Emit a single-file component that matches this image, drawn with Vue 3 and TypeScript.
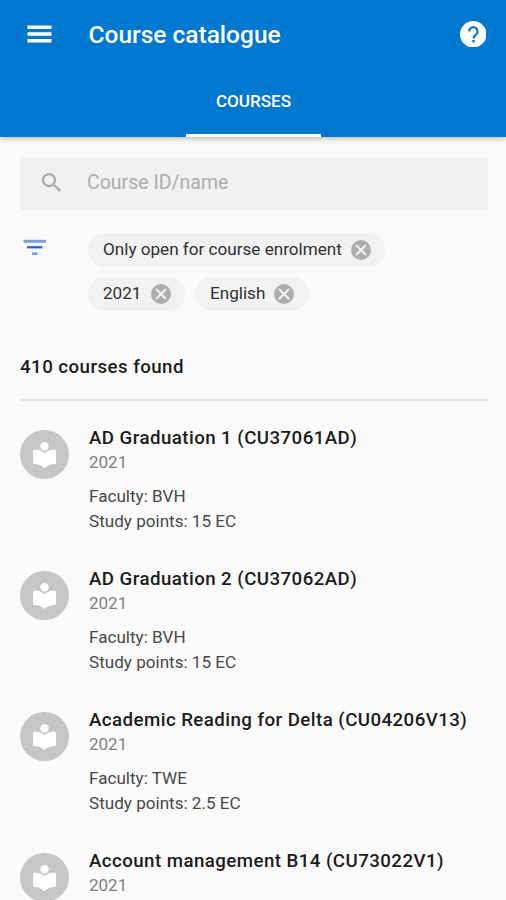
<script setup lang="ts">
import { ref } from 'vue'

interface Course {
  title: string
  year: string
  faculty?: string
  points?: string
}

const query = ref('')

const filters = ref<string[]>(['Only open for course enrolment', '2021', 'English'])

const courses: Course[] = [
  { title: 'AD Graduation 1 (CU37061AD)', year: '2021', faculty: 'BVH', points: '15 EC' },
  { title: 'AD Graduation 2 (CU37062AD)', year: '2021', faculty: 'BVH', points: '15 EC' },
  { title: 'Academic Reading for Delta (CU04206V13)', year: '2021', faculty: 'TWE', points: '2.5 EC' },
  { title: 'Account management B14 (CU73022V1)', year: '2021' },
]

function removeFilter(name: string): void {
  filters.value = filters.value.filter((f) => f !== name)
}
</script>

<template>
  <div class="screen">
    <header class="app-bar">
      <div class="toolbar">
        <button class="icon-button" type="button">
          <svg class="menu-icon" viewBox="0 0 26 18">
            <path d="M0.5 0.600h24v3.500h-24zM0.5 7.200h24v3.500h-24zM0.5 14h24v3.500h-24z" />
          </svg>
        </button>
        <h1 class="title">Course catalogue</h1>
        <button class="icon-button" type="button">
          <svg class="help-icon" viewBox="0 0 26 26">
            <circle cx="13" cy="13" r="13" />
            <path class="help-hook" d="M9 10.200a4.100 4.100 0 1 1 6.900 3c-1.700 1.500-2.700 2-2.700 3.900" />
            <rect class="help-dot" x="12" y="18.600" width="2.400" height="2.400" />
          </svg>
        </button>
      </div>
      <nav class="tabs">
        <a class="tab">COURSES</a>
      </nav>
    </header>

    <main class="content">
      <label class="search">
        <svg class="search-icon" viewBox="3 3 17.500 17.500">
          <path d="M15.500 14h-.790l-.280-.270C15.410 12.590 16 11.110 16 9.500 16 5.910 13.090 3 9.500 3S3 5.910 3 9.500 5.910 16 9.500 16c1.610 0 3.090-.590 4.230-1.570l.270.280v.790l5 4.990L20.490 19l-4.990-5zm-6 0C7.010 14 5 11.990 5 9.500S7.010 5 9.500 5 14 7.010 14 9.500 11.990 14 9.500 14z" />
        </svg>
        <input v-model="query" class="search-input" type="text" placeholder="Course ID/name" />
      </label>

      <section class="filters">
        <svg class="filter-icon" viewBox="0 0 24 17">
          <rect class="soft" x="0.500" y="0.800" width="22.500" height="3" />
          <rect class="strong" x="4" y="7.100" width="15.500" height="2.300" />
          <rect class="soft" x="9" y="13.300" width="5.500" height="2.700" />
        </svg>
        <div class="chips">
          <span v-for="name in filters" :key="name" class="chip">
            <span class="chip-label">{{ name }}</span>
            <svg class="chip-remove" viewBox="0 0 20 20" @click="removeFilter(name)">
              <circle cx="10" cy="10" r="10" />
              <path d="M5 5l10 10M15 5L5 15" />
            </svg>
          </span>
        </div>
      </section>

      <h2 class="count">410 courses found</h2>

      <ul class="courses">
        <li v-for="course in courses" :key="course.title" class="course">
          <span class="avatar">
            <svg class="book-icon" viewBox="0 0 23 26">
              <circle cx="11.500" cy="4.300" r="4.200" />
              <path d="M11.500 11C8.500 8.500 4.500 7.500 1.500 7.500Q0 7.500 0 9V20.500Q0 22 1.500 22C5 22 8.500 23.500 11.500 26C14.500 23.500 18 22 21.500 22Q23 22 23 20.500V9Q23 7.500 21.500 7.500C18.500 7.500 14.500 8.500 11.500 11z" />
            </svg>
          </span>
          <div class="info">
            <h3 class="course-title">{{ course.title }}</h3>
            <p class="year">{{ course.year }}</p>
            <p v-if="course.faculty" class="detail first">Faculty: {{ course.faculty }}</p>
            <p v-if="course.points" class="detail">Study points: {{ course.points }}</p>
          </div>
        </li>
      </ul>
    </main>
  </div>
</template>

<style>
body {
  margin: 0;
  overflow: hidden;
}
</style>

<style scoped>
.screen {
  width: 100%;
  height: 900px;
  overflow: hidden;
  background: #fafafa;
  color: #1c1c1c;
  font-family: Roboto, 'Liberation Sans', sans-serif;
}

h1,
h2,
h3,
p,
ul {
  margin: 0;
  padding: 0;
}

.app-bar {
  box-sizing: border-box;
  height: 137px;
  background: #0078cf;
  color: #fff;
  box-shadow: 0 1px 6px rgba(0, 0, 0, 0.32);
}

.toolbar {
  display: flex;
  align-items: center;
  height: 68px;
  padding: 0 20px 0 27px;
}

.icon-button {
  display: flex;
  padding: 0;
  border: 0;
  background: none;
}

.icon-button svg {
  fill: #fff;
}

.menu-icon {
  width: 26px;
  height: 18px;
}

.help-icon {
  width: 26.500px;
  height: 26.500px;
}

.help-icon .help-hook {
  fill: none;
  stroke: #0078cf;
  stroke-width: 2.100;
}

.help-icon .help-dot {
  fill: #0078cf;
}

.title {
  flex: 1;
  padding: 2px 0 0 35.500px;
  font-size: 24.500px;
  font-weight: 500;
  line-height: 30px;
  white-space: nowrap;
}

.tabs {
  display: flex;
  justify-content: center;
  height: 69px;
  padding-left: 1px;
}

.tab {
  box-sizing: border-box;
  width: 135px;
  border-bottom: 3px solid #fff;
  font-size: 17.100px;
  font-weight: 500;
  line-height: 66px;
  text-align: center;
}

.content {
  padding: 20px 18px 0 20px;
}

.search {
  display: flex;
  align-items: center;
  box-sizing: border-box;
  height: 53px;
  padding-left: 22px;
  border-radius: 3px;
  background: #f1f1f1;
}

.search-icon {
  width: 19px;
  height: 19px;
  margin-bottom: 2px;
  fill: #a9a9a9;
}

.search-input {
  flex: 1;
  margin-left: 26px;
  padding: 0 0 3px;
  border: 0;
  outline: 0;
  background: none;
  font: 400 19.500px Roboto, 'Liberation Sans', sans-serif;
}

.search-input::placeholder {
  color: #acacac;
  opacity: 1;
}

.filters {
  display: flex;
  align-items: flex-start;
  margin-top: 23px;
}

.filter-icon {
  width: 24px;
  height: 17px;
  margin: 6px 41px 0 3px;
}

.soft {
  fill: #7d9fdb;
}

.strong {
  fill: #2f62c6;
}

.chips {
  display: flex;
  flex: 1;
  flex-wrap: wrap;
  gap: 10px;
}

.chip {
  display: flex;
  align-items: center;
  box-sizing: border-box;
  height: 34px;
  padding: 0 14.400px 0 15px;
  border-radius: 17px;
  background: #f2f2f2;
}

.chip-label {
  padding-bottom: 2px;
  font-size: 17.120px;
  color: #303030;
}

.chip-remove {
  width: 20px;
  height: 20px;
  margin-left: 9.100px;
  fill: #adadad;
}

.chip-remove path {
  fill: none;
  stroke: #f4f4f4;
  stroke-width: 2;
}

.count {
  margin-top: 42px;
  padding-bottom: 18px;
  border-bottom: 2px solid #e9e9e9;
  font-size: 18.700px;
  font-weight: 500;
  letter-spacing: 0.450px;
  line-height: 28px;
}

.courses {
  padding-top: 1px;
  list-style: none;
}

.course {
  display: flex;
  height: 141px;
}

.avatar {
  display: flex;
  align-items: center;
  justify-content: center;
  width: 49px;
  height: 49px;
  margin-top: 28px;
  border-radius: 50%;
  background: #c6c6c6;
}

.book-icon {
  width: 23px;
  height: 26px;
  fill: #fff;
}

.info {
  margin: 24px 0 0 20px;
  white-space: nowrap;
}

.course-title {
  font-size: 18.700px;
  font-weight: 500;
  letter-spacing: 0.440px;
  line-height: 25px;
}

.year {
  font-size: 17px;
  line-height: 23px;
  color: #808080;
}

.detail {
  font-size: 17.100px;
  line-height: 24.600px;
  color: #484848;
}

.first {
  margin-top: 10px;
}
</style>
